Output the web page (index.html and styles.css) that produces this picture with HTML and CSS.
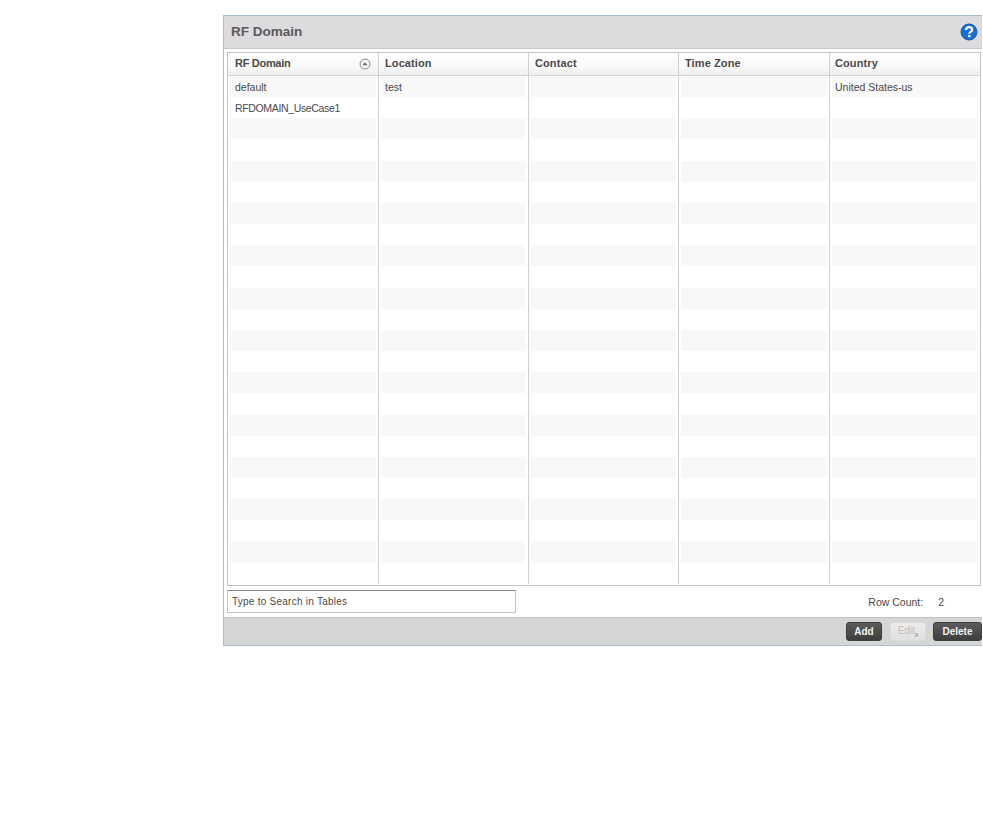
FILE: index.html
```html
<!DOCTYPE html>
<html lang="en">
<head>
<meta charset="utf-8">
<title>RF Domain</title>
<link rel="stylesheet" href="styles.css">
</head>
<body>
<main class="panel">
  <header class="panel-head">
    <h1 class="panel-title">RF Domain</h1>
    <svg class="help" viewBox="0 0 18 18" width="18" height="18" aria-label="Help">
      <circle cx="9" cy="9" r="8" fill="#1470d2" stroke="#0d5cb4" stroke-width="1"/>
      <path d="M6.1 7.1c0-1.9 1.2-3 3-3s3 1.1 3 2.6c0 1.3-.8 1.9-1.6 2.4-.8.5-1.1.9-1.1 1.7" fill="none" stroke="#fff" stroke-width="2.2"/>
      <rect x="8.1" y="12" width="2.3" height="2.3" fill="#fff"/>
    </svg>
  </header>
  <section class="table">
    <div class="thead">
      <div class="th th-sort"><span class="th-tight">RF Domain</span>
        <svg class="sort" viewBox="0 0 12 12" width="12" height="12"><circle cx="6" cy="6" r="5" fill="#f6f6f6" stroke="#8a8a8a" stroke-width="1"/><path d="M3.4 7.3 6 4.3l2.6 3z" fill="#6a6a6a"/></svg>
      </div>
      <div class="th">Location</div>
      <div class="th">Contact</div>
      <div class="th">Time Zone</div>
      <div class="th">Country</div>
    </div>
    <div class="tbody">
      <div class="row"><div class="td">default</div><div class="td">test</div><div class="td"></div><div class="td"></div><div class="td">United States-us</div></div>
      <div class="row"><div class="td td-tight">RFDOMAIN_UseCase1</div><div class="td"></div><div class="td"></div><div class="td"></div><div class="td"></div></div>
      <div class="row"><div class="td"></div><div class="td"></div><div class="td"></div><div class="td"></div><div class="td"></div></div>
      <div class="row"><div class="td"></div><div class="td"></div><div class="td"></div><div class="td"></div><div class="td"></div></div>
      <div class="row"><div class="td"></div><div class="td"></div><div class="td"></div><div class="td"></div><div class="td"></div></div>
      <div class="row"><div class="td"></div><div class="td"></div><div class="td"></div><div class="td"></div><div class="td"></div></div>
      <div class="row"><div class="td"></div><div class="td"></div><div class="td"></div><div class="td"></div><div class="td"></div></div>
      <div class="row"><div class="td"></div><div class="td"></div><div class="td"></div><div class="td"></div><div class="td"></div></div>
      <div class="row"><div class="td"></div><div class="td"></div><div class="td"></div><div class="td"></div><div class="td"></div></div>
      <div class="row"><div class="td"></div><div class="td"></div><div class="td"></div><div class="td"></div><div class="td"></div></div>
      <div class="row"><div class="td"></div><div class="td"></div><div class="td"></div><div class="td"></div><div class="td"></div></div>
      <div class="row"><div class="td"></div><div class="td"></div><div class="td"></div><div class="td"></div><div class="td"></div></div>
      <div class="row"><div class="td"></div><div class="td"></div><div class="td"></div><div class="td"></div><div class="td"></div></div>
      <div class="row"><div class="td"></div><div class="td"></div><div class="td"></div><div class="td"></div><div class="td"></div></div>
      <div class="row"><div class="td"></div><div class="td"></div><div class="td"></div><div class="td"></div><div class="td"></div></div>
      <div class="row"><div class="td"></div><div class="td"></div><div class="td"></div><div class="td"></div><div class="td"></div></div>
      <div class="row"><div class="td"></div><div class="td"></div><div class="td"></div><div class="td"></div><div class="td"></div></div>
      <div class="row"><div class="td"></div><div class="td"></div><div class="td"></div><div class="td"></div><div class="td"></div></div>
      <div class="row"><div class="td"></div><div class="td"></div><div class="td"></div><div class="td"></div><div class="td"></div></div>
      <div class="row"><div class="td"></div><div class="td"></div><div class="td"></div><div class="td"></div><div class="td"></div></div>
      <div class="row"><div class="td"></div><div class="td"></div><div class="td"></div><div class="td"></div><div class="td"></div></div>
      <div class="row"><div class="td"></div><div class="td"></div><div class="td"></div><div class="td"></div><div class="td"></div></div>
      <div class="row"><div class="td"></div><div class="td"></div><div class="td"></div><div class="td"></div><div class="td"></div></div>
      <div class="row"><div class="td"></div><div class="td"></div><div class="td"></div><div class="td"></div><div class="td"></div></div>
    </div>
  </section>
  <div class="tools">
    <input class="search" type="text" value="Type to Search in Tables" aria-label="Search">
    <div class="count"><span>Row Count:</span><span class="count-num">2</span></div>
  </div>
  <footer class="actions">
    <button class="btn btn-add" type="button">Add</button>
    <button class="btn btn-off" type="button">Edit<span class="sub">x</span></button>
    <button class="btn btn-del" type="button">Delete</button>
  </footer>
</main>
</body>
</html>
```
FILE: styles.css
```css
html, body { margin: 0; padding: 0; background: #fff; }
body {
  height: 824px;
  overflow: hidden;
  padding: 15px 0 0 223px;
  box-sizing: border-box;
  font-family: "Liberation Sans", Arial, sans-serif;
  color: #3c3c3c;
}
.panel {
  width: 759px;
  height: 631px;
  box-sizing: border-box;
  display: flex;
  flex-direction: column;
  border-top: 1px solid #a9bcd0;
  border-left: 1px solid #a9bcd0;
  border-bottom: 1px solid #a9bcd0;
}
.panel-head {
  height: 32px;
  flex: none;
  display: flex;
  align-items: center;
  justify-content: space-between;
  padding: 0 4px 0 7px;
  background: #dedbde;
  border-bottom: 1px solid #c8c8c8;
}
.panel-title {
  margin: 0 0 2px;
  font-size: 13.5px;
  font-weight: bold;
  color: #5a5a5a;
}
.help { flex: none; }
.table {
  flex: none;
  width: 754px;
  height: 534px;
  margin: 3px 0 0 3px;
  box-sizing: border-box;
  border: 1px solid #c4c4c4;
  display: flex;
  flex-direction: column;
}
.thead, .row {
  display: grid;
  grid-template-columns: 151px 150px 150px 151px 1fr;
}
.thead {
  height: 23px;
  flex: none;
  box-sizing: border-box;
  background: linear-gradient(#fff, #f9f9f9 60%, #efefef);
  border-bottom: 1px solid #d4d4d4;
}
.th {
  display: flex;
  align-items: center;
  justify-content: space-between;
  padding: 0 6px 2px;
  border-right: 1px solid #d0d0d0;
  font-size: 11px;
  font-weight: bold;
  letter-spacing: .1px;
  color: #4a4a4a;
}
.th:first-child, .td:first-child { padding-left: 7px; }
.th:last-child, .td:last-child { border-right: 0; padding-left: 5px; }
.th-sort { padding-right: 7px; }
.th-tight { letter-spacing: -.3px; }
.sort { flex: none; margin-top: 2px; }
.tbody { flex: 1; display: flex; flex-direction: column; }
.row { height: 21.17px; flex: none; }
.td {
  position: relative;
  padding: 1px 6px 0;
  border-right: 1px solid #d0d0d0;
  font-size: 10.5px;
  line-height: 20px;
  color: #4a4a4a;
  white-space: nowrap;
  overflow: hidden;
  z-index: 0;
}
.td-tight { letter-spacing: -.35px; }
.row:nth-child(odd) .td::before {
  content: "";
  position: absolute;
  inset: 0 2px 0 2px;
  background: #f8f8f8;
  z-index: -1;
}
.tools {
  flex: 1;
  display: flex;
  align-items: center;
  justify-content: space-between;
  padding: 0 38px 0 3px;
}
.search {
  width: 289px;
  height: 23px;
  box-sizing: border-box;
  padding: 0 4px;
  border: 1px solid #c4c4c4;
  border-top-color: #888;
  background: #fff;
  font: 10px "Liberation Sans", Arial, sans-serif;
  letter-spacing: .25px;
  color: #4a4a4a;
}
.count {
  display: flex;
  gap: 15px;
  font-size: 10.5px;
  color: #4a4a4a;
}
.actions {
  height: 28px;
  flex: none;
  box-sizing: border-box;
  display: flex;
  align-items: center;
  justify-content: flex-end;
  gap: 8px;
  padding-right: 0;
  background: #d6d6d6;
  border-top: 1px solid #c4c4c4;
}
.btn {
  height: 19px;
  padding: 0;
  border: 1px solid #3e3e3e;
  border-radius: 3px;
  background: linear-gradient(#5c5c5c, #3e3e3e);
  color: #f4f4f4;
  font: bold 10px "Liberation Sans", Arial, sans-serif;
}
.btn-add { width: 36px; }
.btn-off {
  width: 36px;
  margin-right: -1px;
  background: linear-gradient(#ececec, #e0e0e0);
  border-color: #dadada;
  color: #bdbdbd;
  font-weight: normal;
}
.btn-del { width: 49px; }
.sub { font-size: 7px; vertical-align: sub; color: #888; }
```
